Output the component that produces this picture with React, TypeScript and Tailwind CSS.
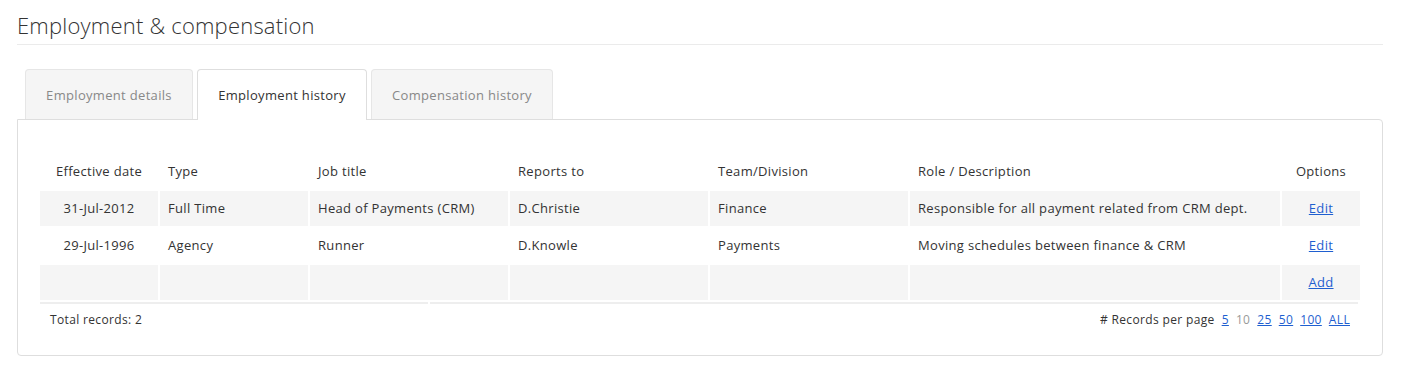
const rows = [
  {
    date: "31-Jul-2012",
    type: "Full Time",
    title: "Head of Payments (CRM)",
    reports: "D.Christie",
    team: "Finance",
    role: "Responsible for all payment related from CRM dept.",
  },
  {
    date: "29-Jul-1996",
    type: "Agency",
    title: "Runner",
    reports: "D.Knowle",
    team: "Payments",
    role: "Moving schedules between finance & CRM",
  },
];

const tabs = [
  { label: "Employment details", w: "w-[168px]", active: false },
  { label: "Employment history", w: "w-[170px]", active: true },
  { label: "Compensation history", w: "w-[182px]", active: false },
];

export default function App() {
  return (
    <div
      className="bg-white min-h-[375px] pl-[17px] pr-[22px] pt-[10px] text-[#333]"
      style={{ fontFamily: '"Open Sans", "Noto Sans", sans-serif' }}
    >
      <h1 className="text-[22px] font-light tracking-[0.2px] leading-[30px] pb-[4px] border-b border-[#ebebeb]">
        Employment &amp; compensation
      </h1>

      <div className="mt-[24px] flex gap-[4px] pl-[8px] relative z-10 tracking-[0.32px]">
        {tabs.map((t) => (
          <div
            key={t.label}
            className={`${t.w} flex items-center justify-center text-[13px] pt-[2px] rounded-t-[4px] border border-b-0 ${
              t.active
                ? "bg-white border-[#dedede] text-[#333] h-[51px]"
                : "bg-[#f5f5f5] border-[#e6e6e6] text-[#888] h-[50px]"
            }`}
          >
            {t.label}
          </div>
        ))}
      </div>

      <div className="-mt-px border border-[#dedede] rounded-b-[4px] rounded-tr-[4px] px-[20px] pt-[32px] h-[237px] flex flex-col">
        <table className="border-separate border-spacing-[2px] text-[13px] tracking-[0.32px] w-[1324px]">
          <thead>
            <tr className="h-[35px]">
              <th className="w-[118px] font-normal text-center">Effective date</th>
              <th className="w-[148px] font-normal text-left pl-[8px]">Type</th>
              <th className="w-[198px] font-normal text-left pl-[8px]">Job title</th>
              <th className="w-[198px] font-normal text-left pl-[8px]">Reports to</th>
              <th className="w-[198px] font-normal text-left pl-[8px]">Team/Division</th>
              <th className="w-[370px] font-normal text-left pl-[8px]">Role / Description</th>
              <th className="w-[78px] font-normal text-center">Options</th>
            </tr>
          </thead>
          <tbody>
            {rows.map((r, i) => (
              <tr key={r.date} className={`h-[35px] ${i % 2 === 0 ? "bg-[#f5f5f5]" : ""}`}>
                <td className="text-center">{r.date}</td>
                <td className="pl-[8px]">{r.type}</td>
                <td className="pl-[8px]">{r.title}</td>
                <td className="pl-[8px]">{r.reports}</td>
                <td className="pl-[8px]">{r.team}</td>
                <td className="pl-[8px]">{r.role}</td>
                <td className="text-center">
                  <a href="#" className="text-[#1f5fd0] underline">
                    Edit
                  </a>
                </td>
              </tr>
            ))}
            <tr className="h-[35px] bg-[#f5f5f5]">
              <td />
              <td />
              <td />
              <td />
              <td />
              <td />
              <td className="text-center">
                <a href="#" className="text-[#1f5fd0] underline">
                  Add
                </a>
              </td>
            </tr>
          </tbody>
        </table>

        <div className="flex gap-[2px] ml-[2px] w-[1318px]">
          <div className="h-[2px] w-[388px] bg-[#eeeeee]" />
          <div className="h-[2px] flex-1 bg-[#eeeeee]" />
        </div>

        <div className="flex justify-between items-center text-[12px] tracking-[0.35px] pl-[12px] pr-[12px] pt-[7px] w-[1324px]">
          <span>Total records: 2</span>
          <div className="flex items-center gap-[7px]">
            <span># Records per page</span>
            <a href="#" className="text-[#1f5fd0] underline">5</a>
            <span className="text-[#999]">10</span>
            <a href="#" className="text-[#1f5fd0] underline">25</a>
            <a href="#" className="text-[#1f5fd0] underline">50</a>
            <a href="#" className="text-[#1f5fd0] underline">100</a>
            <a href="#" className="text-[#1f5fd0] underline">ALL</a>
          </div>
        </div>
      </div>
    </div>
  );
}
